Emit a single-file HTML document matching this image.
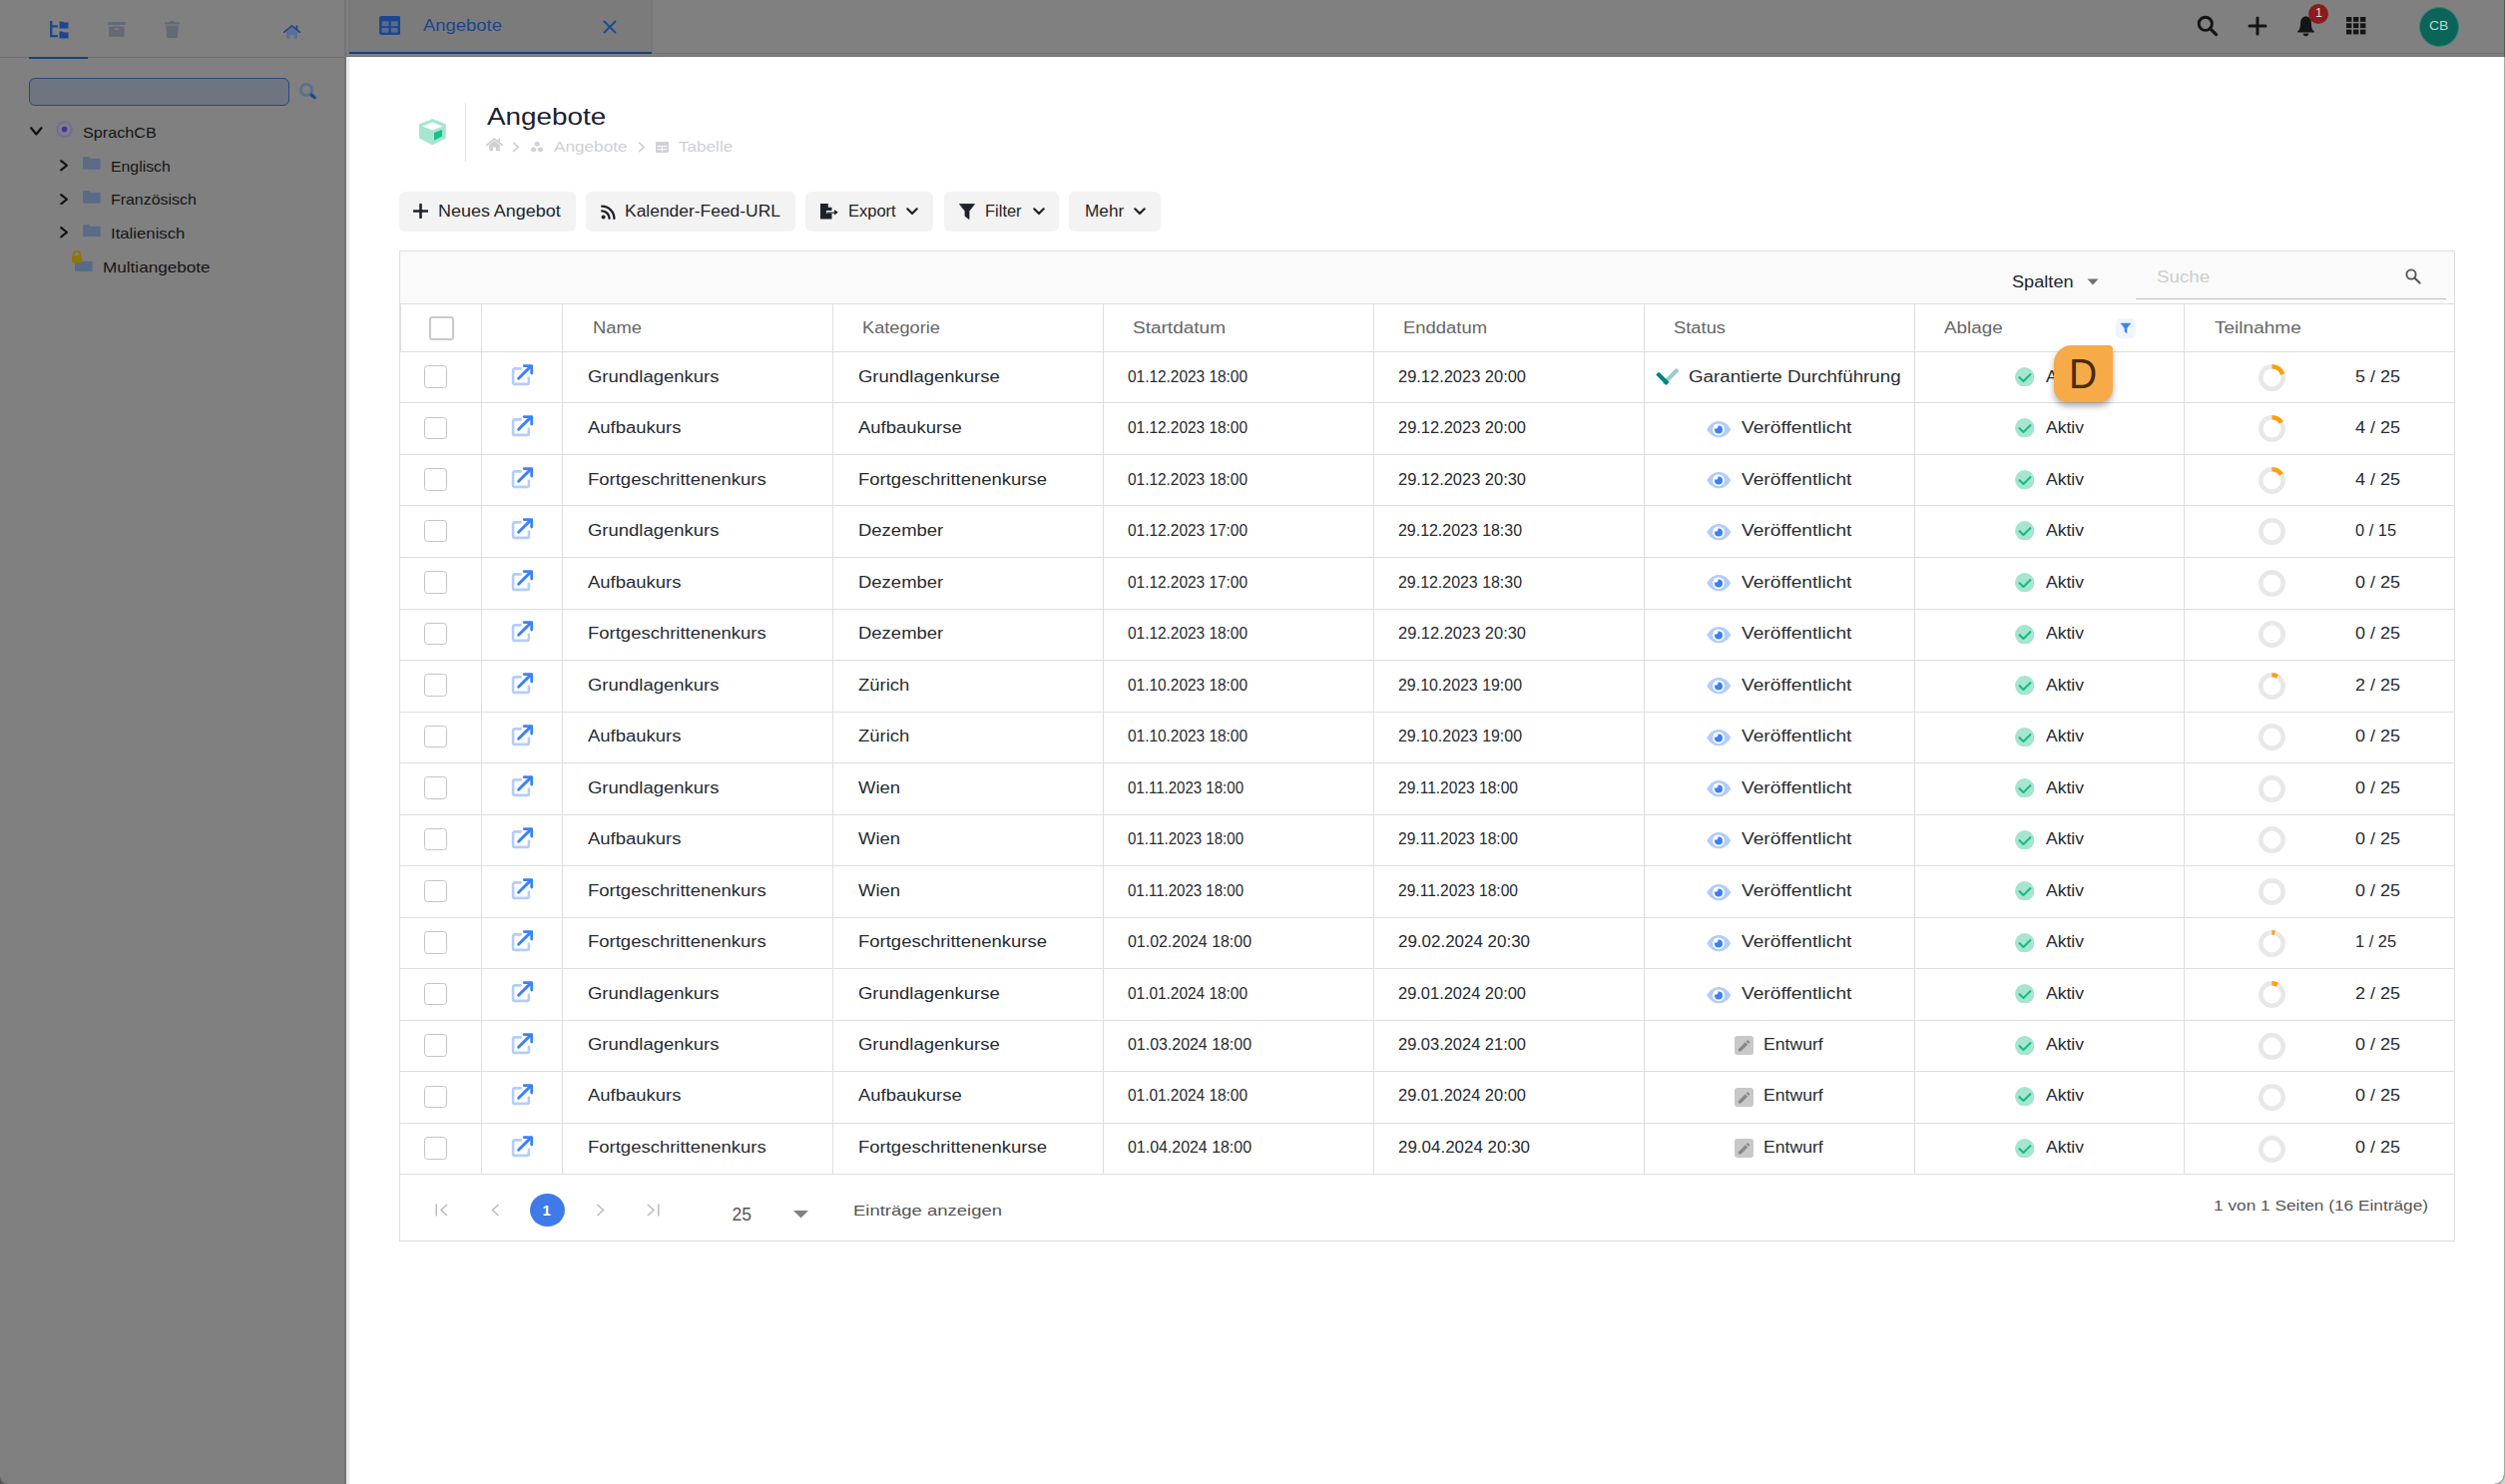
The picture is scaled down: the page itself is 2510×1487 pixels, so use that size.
<!DOCTYPE html>
<html><head><meta charset="utf-8"><title>Angebote</title>
<style>
html,body{margin:0;padding:0;}
body{width:2510px;height:1487px;overflow:hidden;position:relative;background:#fff;font-family:"Liberation Sans", sans-serif;}
.a{position:absolute;}
.t{position:absolute;white-space:pre;line-height:1;}
</style></head><body>
<div class="a" style="left:0px;top:0px;width:347.00px;height:1487.00px;background:#808080;"></div><div class="a" style="left:345px;top:0px;width:2.00px;height:1487.00px;background:#737373;"></div><div class="a" style="left:0px;top:57px;width:345.00px;height:1.00px;background:#6d6d6d;"></div><svg class="a" style="left:0px;top:1480px;" width="8" height="7" viewBox="0 0 8 7"><path d="M0 0 V7 H7 A7 7 0 0 1 0 0 Z" fill="#555555"/><path d="M0.3 0 A7 7 0 0 0 7 6.7" fill="none" stroke="#6c6c6c" stroke-width="1.1"/></svg><div class="a" style="left:29px;top:57px;width:59.00px;height:1.50px;background:#173e80;"></div><svg class="a" style="left:48.5px;top:21px;" width="20" height="18" viewBox="0 0 20 18"><path d="M1 0 H3.4 V4.3 H9 V6.6 H3.4 V14 H9 V16.3 H1 Z" fill="#1e4690"/><path d="M10.5 0.5 H14 L15 1.5 H19.5 V7.5 H10.5 Z M10.5 10.5 H14 L15 11.5 H19.5 V17.5 H10.5 Z" fill="#1e4690"/></svg><svg class="a" style="left:108px;top:22px;" width="18" height="15" viewBox="0 0 18 15"><rect x="0" y="0" width="17.5" height="3" rx="0.5" fill="#636a75"/><rect x="1" y="4.5" width="15.5" height="10.3" fill="#636a75"/><rect x="6.5" y="6.5" width="4.5" height="1.5" fill="#808080"/></svg><svg class="a" style="left:165px;top:21px;" width="15" height="17" viewBox="0 0 15 17"><rect x="0" y="1.3" width="15" height="2.2" fill="#636a75"/><rect x="5" y="0" width="5" height="2" rx="1" fill="#636a75"/><path d="M1.2 4.5 H13.8 L12.8 17 H2.2 Z" fill="#636a75"/></svg><svg class="a" style="left:284px;top:24.8px;" width="17" height="14" viewBox="0 0 17 14"><path d="M3 7 L8.5 2.5 L14 7 V13.6 H10.5 V10 H6.5 V13.6 H3 Z" fill="#5a6f96"/><path d="M0.8 7.2 L8.5 0.9 L16.2 7.2" fill="none" stroke="#1c4490" stroke-width="1.7" stroke-linecap="round"/><rect x="12.5" y="0.6" width="1.7" height="4.2" fill="#1c4490"/></svg><div class="a" style="left:29.2px;top:78px;width:258.6px;height:25.6px;border:1.4px solid #21498c;border-radius:6px;background:#6e7580"></div><svg class="a" style="left:299px;top:82px;" width="20" height="20" viewBox="0 0 20 20"><circle cx="8" cy="8" r="5.6" fill="none" stroke="#5b6d8e" stroke-width="2.7"/><path d="M12.3 12.2 L17.2 16.6" stroke="#1f4790" stroke-width="3.2"/></svg><svg class="a" style="left:30px;top:127px;" width="12.7" height="9" viewBox="0 0 12.7 9"><path d="M1.2 1.2 L6.35 7.5 L11.5 1.2" fill="none" stroke="#111" stroke-width="2.2" stroke-linecap="round" stroke-linejoin="round"/></svg><svg class="a" style="left:56px;top:121px;" width="18" height="18" viewBox="0 0 18 18"><circle cx="8.6" cy="8.6" r="7.3" fill="none" stroke="#74699c" stroke-width="2"/><circle cx="8.6" cy="8.6" r="2.8" fill="#3f34a0"/></svg><span class="t" style="left:83.30px;top:125.00px;font-size:15px;color:#151515;transform:scaleX(1.0779);transform-origin:0 0;">SprachCB</span><svg class="a" style="left:59.5px;top:160.0px;" width="8.5" height="11.5" viewBox="0 0 8.5 11.5"><path d="M1.2 1.2 L7.0 5.75 L1.2 10.3" fill="none" stroke="#111" stroke-width="2.2" stroke-linecap="round" stroke-linejoin="round"/></svg><svg class="a" style="left:83px;top:157.3px;" width="17.6" height="12.7" viewBox="0 0 17.6 12.7"><path d="M0 1.2 Q0 0 1.2 0 H6 L7.6 1.8 H16.4 Q17.6 1.8 17.6 3 V11.5 Q17.6 12.7 16.4 12.7 H1.2 Q0 12.7 0 11.5 Z" fill="#5a6b88"/></svg><span class="t" style="left:110.60px;top:159.00px;font-size:15px;color:#151515;transform:scaleX(1.0546);transform-origin:0 0;">Englisch</span><svg class="a" style="left:59.5px;top:193.6px;" width="8.5" height="11.5" viewBox="0 0 8.5 11.5"><path d="M1.2 1.2 L7.0 5.75 L1.2 10.3" fill="none" stroke="#111" stroke-width="2.2" stroke-linecap="round" stroke-linejoin="round"/></svg><svg class="a" style="left:83px;top:190.9px;" width="17.6" height="12.7" viewBox="0 0 17.6 12.7"><path d="M0 1.2 Q0 0 1.2 0 H6 L7.6 1.8 H16.4 Q17.6 1.8 17.6 3 V11.5 Q17.6 12.7 16.4 12.7 H1.2 Q0 12.7 0 11.5 Z" fill="#5a6b88"/></svg><span class="t" style="left:110.60px;top:192.00px;font-size:15px;color:#151515;transform:scaleX(1.0611);transform-origin:0 0;">Französisch</span><svg class="a" style="left:59.5px;top:227.2px;" width="8.5" height="11.5" viewBox="0 0 8.5 11.5"><path d="M1.2 1.2 L7.0 5.75 L1.2 10.3" fill="none" stroke="#111" stroke-width="2.2" stroke-linecap="round" stroke-linejoin="round"/></svg><svg class="a" style="left:83px;top:224.5px;" width="17.6" height="12.7" viewBox="0 0 17.6 12.7"><path d="M0 1.2 Q0 0 1.2 0 H6 L7.6 1.8 H16.4 Q17.6 1.8 17.6 3 V11.5 Q17.6 12.7 16.4 12.7 H1.2 Q0 12.7 0 11.5 Z" fill="#5a6b88"/></svg><span class="t" style="left:110.60px;top:226.00px;font-size:15px;color:#151515;transform:scaleX(1.1154);transform-origin:0 0;">Italienisch</span><svg class="a" style="left:75.4px;top:259.8px;" width="17.6" height="12.7" viewBox="0 0 17.6 12.7"><path d="M0 1.2 Q0 0 1.2 0 H6 L7.6 1.8 H16.4 Q17.6 1.8 17.6 3 V11.5 Q17.6 12.7 16.4 12.7 H1.2 Q0 12.7 0 11.5 Z" fill="#5a6b88"/></svg><svg class="a" style="left:71px;top:250.5px;" width="12" height="13" viewBox="0 0 12 13"><path d="M2.8 5.5 V3.8 A3.2 3.2 0 0 1 9.2 3.8 V5.5" fill="none" stroke="#8f7800" stroke-width="1.8"/><rect x="1" y="5.3" width="10" height="7.2" rx="1" fill="#8f7800"/></svg><span class="t" style="left:103.40px;top:260.00px;font-size:15px;color:#151515;transform:scaleX(1.1418);transform-origin:0 0;">Multiangebote</span><div class="a" style="left:347px;top:0px;width:2163.00px;height:57.00px;background:#808080;"></div><div class="a" style="left:347px;top:53px;width:2163.00px;height:1.00px;background:#727272;"></div><div class="a" style="left:347px;top:56px;width:2163.00px;height:1.00px;background:#747474;"></div><div class="a" style="left:349px;top:0px;width:305.00px;height:52.00px;background:#7b7b7b;"></div><div class="a" style="left:349px;top:0px;width:1.00px;height:52.00px;background:#767676;"></div><div class="a" style="left:653px;top:0px;width:1.00px;height:54.00px;background:#767676;"></div><div class="a" style="left:350px;top:52px;width:303.00px;height:2.00px;background:#173e80;"></div><svg class="a" style="left:380px;top:16px;" width="21.3" height="19" viewBox="0 0 21.3 19"><rect x="0" y="0" width="21.3" height="19" rx="2.2" fill="#1e4690"/><rect x="2.6" y="5.3" width="6.8" height="5" fill="#5a6c8c"/><rect x="11.8" y="5.3" width="6.8" height="5" fill="#5a6c8c"/><rect x="2.6" y="12" width="6.8" height="4.6" fill="#5a6c8c"/><rect x="11.8" y="12" width="6.8" height="4.6" fill="#5a6c8c"/></svg><span class="t" style="left:424.00px;top:18.00px;font-size:16px;color:#1c4590;transform:scaleX(1.1530);transform-origin:0 0;">Angebote</span><svg class="a" style="left:604px;top:20px;" width="14" height="14" viewBox="0 0 14 14"><path d="M1.5 1.5 L12.5 12.5 M12.5 1.5 L1.5 12.5" stroke="#1f4a95" stroke-width="1.9" stroke-linecap="round"/></svg><svg class="a" style="left:2201px;top:15px;" width="22" height="22" viewBox="0 0 22 22"><circle cx="8.8" cy="8.8" r="6.6" fill="none" stroke="#141414" stroke-width="2.9"/><path d="M13.6 13.6 L19.6 19.6" stroke="#141414" stroke-width="3.2" stroke-linecap="round"/></svg><svg class="a" style="left:2252px;top:16px;" width="20" height="20" viewBox="0 0 20 20"><path d="M10 2 V18 M2 10 H18" stroke="#141414" stroke-width="3" stroke-linecap="round"/></svg><svg class="a" style="left:2301px;top:15px;" width="19" height="22" viewBox="0 0 19 22"><path d="M9.5 1.2 C4.5 2 4 6 4 9.5 C4 13 3 15 1.2 16.6 Q0.8 17.4 1.8 17.6 H17.2 Q18.2 17.4 17.8 16.6 C16 15 15 13 15 9.5 C15 6 14.5 2 9.5 1.2 Z" fill="#141414"/><path d="M6.8 18.6 A2.7 2.7 0 0 0 12.2 18.6 Z" fill="#141414"/></svg><div class="a" style="left:2313px;top:4px;width:20px;height:20px;border-radius:50%;background:#8a1c1c"></div><span class="t" style="left:2320.00px;top:7.00px;font-size:12.5px;color:#dadada;">1</span><svg class="a" style="left:2351px;top:17px;" width="20" height="18" viewBox="0 0 20 18"><rect x="0" y="0.0" width="5.4" height="4.8" fill="#141414"/><rect x="7" y="0.0" width="5.4" height="4.8" fill="#141414"/><rect x="14" y="0.0" width="5.4" height="4.8" fill="#141414"/><rect x="0" y="6.3" width="5.4" height="4.8" fill="#141414"/><rect x="7" y="6.3" width="5.4" height="4.8" fill="#141414"/><rect x="14" y="6.3" width="5.4" height="4.8" fill="#141414"/><rect x="0" y="12.6" width="5.4" height="4.8" fill="#141414"/><rect x="7" y="12.6" width="5.4" height="4.8" fill="#141414"/><rect x="14" y="12.6" width="5.4" height="4.8" fill="#141414"/></svg><div class="a" style="left:2424px;top:7px;width:38px;height:38px;border-radius:50%;background:#0a6458;border:1px solid #3a8078"></div><span class="t" style="left:2434.20px;top:19.00px;font-size:13.3px;color:#c0d4cf;transform:scaleX(1.0441);transform-origin:0 0;">CB</span><div class="a" style="left:347px;top:57px;width:2163.00px;height:1430.00px;background:#ffffff;"></div><div class="a" style="left:347px;top:57px;width:1.00px;height:1430.00px;background:#f2f2f2;"></div><div class="a" style="left:348px;top:57px;width:2.00px;height:1430.00px;background:#e5e5e5;"></div><div class="a" style="left:2509px;top:57px;width:1.00px;height:1430.00px;background:#a8a8a8;"></div><div class="a" style="left:2509px;top:0px;width:1.00px;height:57.00px;background:#585858;"></div><svg class="a" style="left:2497px;top:1475px;" width="13" height="12" viewBox="0 0 13 12"><path d="M13 2 V12 H2 A10 10 0 0 0 12 2 Z" fill="#d0d0d0"/><path d="M12.5 0 V2 A10.5 10.5 0 0 1 2 12.5" fill="none" stroke="#a4a4a4" stroke-width="1.3"/></svg><svg class="a" style="left:420px;top:119px;" width="27" height="27" viewBox="0 0 27 27"><path d="M13.3 0 L26.8 5.3 V19.5 L13.3 26.3 L0 19.5 V5.3 Z" fill="#a5e6d1"/><path d="M3 7.5 L13.5 3.4 L23.4 7.5 L13.5 11.4 Z" fill="#ffffff"/><path d="M15 14 L23 11 V17.6 L15 21.7 Z" fill="#19bf8a"/></svg><div class="a" style="left:466px;top:103px;width:1.00px;height:59.00px;background:#e3e3e3;"></div><span class="t" style="left:487.80px;top:105.00px;font-size:24px;color:#1b2030;transform:scaleX(1.1599);transform-origin:0 0;">Angebote</span><svg class="a" style="left:487px;top:137.5px;" width="17" height="14" viewBox="0 0 17 14"><path d="M3.2 7.2 L8.5 3 L13.8 7.2 V13.2 H10 V9.6 H7 V13.2 H3.2 Z" fill="#cfd0d8"/><path d="M0.9 7.4 L8.5 1.2 L16.1 7.4" fill="none" stroke="#cfd0d8" stroke-width="1.8" stroke-linecap="round" stroke-linejoin="round"/><rect x="12.2" y="0.6" width="1.8" height="4.2" fill="#cfd0d8"/></svg><svg class="a" style="left:513px;top:142px;" width="8" height="11" viewBox="0 0 8 11"><path d="M1.6 1.2 L6.2 5.4 L1.6 9.6" fill="none" stroke="#cfd0d8" stroke-width="1.7" stroke-linecap="round" stroke-linejoin="round"/></svg><svg class="a" style="left:530.5px;top:141px;" width="14" height="12.5" viewBox="0 0 14 12.5"><path d="M7 0.40000000000000036 L9.9 1.8000000000000003 V4.800000000000001 L7 6.2 L4.1 4.800000000000001 V1.8000000000000003 Z" fill="#cfd0d8" stroke="#fff" stroke-width="0.7"/><path d="M3.6 6.000000000000001 L6.5 7.4 V10.4 L3.6 11.8 L0.7000000000000002 10.4 V7.4 Z" fill="#cfd0d8" stroke="#fff" stroke-width="0.7"/><path d="M10.4 6.000000000000001 L13.3 7.4 V10.4 L10.4 11.8 L7.5 10.4 V7.4 Z" fill="#cfd0d8" stroke="#fff" stroke-width="0.7"/></svg><span class="t" style="left:554.80px;top:140.00px;font-size:14.5px;color:#cfd0d8;transform:scaleX(1.1837);transform-origin:0 0;">Angebote</span><svg class="a" style="left:639px;top:142px;" width="8" height="11" viewBox="0 0 8 11"><path d="M1.6 1.2 L6.2 5.4 L1.6 9.6" fill="none" stroke="#cfd0d8" stroke-width="1.7" stroke-linecap="round" stroke-linejoin="round"/></svg><svg class="a" style="left:657px;top:142px;" width="13" height="11" viewBox="0 0 13 11"><rect x="0" y="0" width="13" height="11" rx="1.2" fill="#cfd0d8"/><path d="M1.4 4.6 H11.6 M1.4 7.7 H11.6 M6.5 4.6 V9.6" stroke="#fff" stroke-width="1"/></svg><span class="t" style="left:680.20px;top:140.00px;font-size:14.5px;color:#cfd0d8;transform:scaleX(1.1795);transform-origin:0 0;">Tabelle</span><div class="a" style="left:400px;top:192px;width:177px;height:40px;border-radius:6px;background:#f3f3f3"></div><svg class="a" style="left:414px;top:204px;" width="15" height="15" viewBox="0 0 15 15"><path d="M7.5 1 V14 M1 7.5 H14" stroke="#1f2328" stroke-width="2.6" stroke-linecap="round"/></svg><span class="t" style="left:438.70px;top:204.00px;font-size:16px;color:#1f2328;transform:scaleX(1.1213);transform-origin:0 0;">Neues Angebot</span><div class="a" style="left:587px;top:192px;width:210px;height:40px;border-radius:6px;background:#f3f3f3"></div><svg class="a" style="left:601.5px;top:204.7px;" width="15" height="15" viewBox="0 0 15 15"><circle cx="2.6" cy="12.4" r="2" fill="#1f2328"/><path d="M1.2 6.4 A7.6 7.6 0 0 1 8.6 13.8" fill="none" stroke="#1f2328" stroke-width="2.4" stroke-linecap="round"/><path d="M1.2 1.6 A12.4 12.4 0 0 1 13.4 13.8" fill="none" stroke="#1f2328" stroke-width="2.4" stroke-linecap="round"/></svg><span class="t" style="left:625.60px;top:204.00px;font-size:16px;color:#1f2328;transform:scaleX(1.0895);transform-origin:0 0;">Kalender-Feed-URL</span><div class="a" style="left:807px;top:192px;width:128px;height:40px;border-radius:6px;background:#f3f3f3"></div><svg class="a" style="left:822px;top:204px;" width="18" height="16" viewBox="0 0 18 16"><path d="M0 0 H7.5 L11.5 4 V7 H6 V10 H11.5 V15.5 H0 Z" fill="#1f2328"/><path d="M7.8 0 V3.7 H11.5" fill="#f3f3f3"/><path d="M6.5 8.5 H14 V6 L17.8 8.8 L14 11.6 V9.8 H6.5 Z" fill="#1f2328"/></svg><span class="t" style="left:850.00px;top:204.00px;font-size:16px;color:#1f2328;transform:scaleX(1.0314);transform-origin:0 0;">Export</span><svg class="a" style="left:908px;top:208px;" width="12" height="8" viewBox="0 0 12 8"><path d="M1.3 1.3 L6 6 L10.7 1.3" fill="none" stroke="#1f2328" stroke-width="2.2" stroke-linecap="round" stroke-linejoin="round"/></svg><div class="a" style="left:946px;top:192px;width:115px;height:40px;border-radius:6px;background:#f3f3f3"></div><svg class="a" style="left:961px;top:204px;" width="16" height="16" viewBox="0 0 16 16"><path d="M0.5 0.5 H15.5 L10 7.5 V15.5 L6 12.5 V7.5 Z" fill="#1f2328" stroke="#1f2328" stroke-width="0.8" stroke-linejoin="round"/></svg><span class="t" style="left:987.40px;top:204.00px;font-size:16px;color:#1f2328;transform:scaleX(1.0292);transform-origin:0 0;">Filter</span><svg class="a" style="left:1035px;top:208px;" width="12" height="8" viewBox="0 0 12 8"><path d="M1.3 1.3 L6 6 L10.7 1.3" fill="none" stroke="#1f2328" stroke-width="2.2" stroke-linecap="round" stroke-linejoin="round"/></svg><div class="a" style="left:1071px;top:192px;width:92px;height:40px;border-radius:6px;background:#f3f3f3"></div><span class="t" style="left:1086.60px;top:204.00px;font-size:16px;color:#1f2328;transform:scaleX(1.0754);transform-origin:0 0;">Mehr</span><svg class="a" style="left:1136px;top:208px;" width="12" height="8" viewBox="0 0 12 8"><path d="M1.3 1.3 L6 6 L10.7 1.3" fill="none" stroke="#1f2328" stroke-width="2.2" stroke-linecap="round" stroke-linejoin="round"/></svg><div class="a" style="left:400px;top:251px;width:2058px;height:991px;border:1px solid #dedede;box-sizing:content-box;"></div><div class="a" style="left:401px;top:252px;width:2058.00px;height:52.00px;background:#fafafa;"></div><span class="t" style="left:2016.20px;top:275.00px;font-size:16px;color:#22262b;transform:scaleX(1.1352);transform-origin:0 0;">Spalten</span><svg class="a" style="left:2091px;top:279px;" width="12" height="7" viewBox="0 0 12 7"><path d="M0.5 0.5 H11.5 L6 6.5 Z" fill="#707070"/></svg><span class="t" style="left:2160.50px;top:270.00px;font-size:16px;color:#cdcdcd;transform:scaleX(1.1725);transform-origin:0 0;">Suche</span><svg class="a" style="left:2410px;top:269px;" width="16" height="16" viewBox="0 0 16 16"><circle cx="6" cy="6" r="4.6" fill="none" stroke="#555" stroke-width="1.9"/><path d="M9.4 9.4 L14.6 14.6" stroke="#555" stroke-width="2.1" stroke-linecap="round"/></svg><div class="a" style="left:2140px;top:298.5px;width:311.00px;height:1.50px;background:#bdbdbd;"></div><div class="a" style="left:400px;top:304px;width:2059.00px;height:1.00px;background:#dedede;"></div><div class="a" style="left:400px;top:352px;width:2059.00px;height:1.00px;background:#dedede;"></div><div class="a" style="left:400px;top:403px;width:2059.00px;height:1.00px;background:#dedede;"></div><div class="a" style="left:400px;top:455px;width:2059.00px;height:1.00px;background:#dedede;"></div><div class="a" style="left:400px;top:506px;width:2059.00px;height:1.00px;background:#dedede;"></div><div class="a" style="left:400px;top:558px;width:2059.00px;height:1.00px;background:#dedede;"></div><div class="a" style="left:400px;top:610px;width:2059.00px;height:1.00px;background:#dedede;"></div><div class="a" style="left:400px;top:661px;width:2059.00px;height:1.00px;background:#dedede;"></div><div class="a" style="left:400px;top:713px;width:2059.00px;height:1.00px;background:#dedede;"></div><div class="a" style="left:400px;top:764px;width:2059.00px;height:1.00px;background:#dedede;"></div><div class="a" style="left:400px;top:816px;width:2059.00px;height:1.00px;background:#dedede;"></div><div class="a" style="left:400px;top:867px;width:2059.00px;height:1.00px;background:#dedede;"></div><div class="a" style="left:400px;top:919px;width:2059.00px;height:1.00px;background:#dedede;"></div><div class="a" style="left:400px;top:970px;width:2059.00px;height:1.00px;background:#dedede;"></div><div class="a" style="left:400px;top:1022px;width:2059.00px;height:1.00px;background:#dedede;"></div><div class="a" style="left:400px;top:1073px;width:2059.00px;height:1.00px;background:#dedede;"></div><div class="a" style="left:400px;top:1125px;width:2059.00px;height:1.00px;background:#dedede;"></div><div class="a" style="left:400px;top:1176px;width:2059.00px;height:1.00px;background:#dedede;"></div><div class="a" style="left:482px;top:304px;width:1.00px;height:873.00px;background:#dedede;"></div><div class="a" style="left:563px;top:304px;width:1.00px;height:873.00px;background:#dedede;"></div><div class="a" style="left:834px;top:304px;width:1.00px;height:873.00px;background:#dedede;"></div><div class="a" style="left:1105px;top:304px;width:1.00px;height:873.00px;background:#dedede;"></div><div class="a" style="left:1376px;top:304px;width:1.00px;height:873.00px;background:#dedede;"></div><div class="a" style="left:1647px;top:304px;width:1.00px;height:873.00px;background:#dedede;"></div><div class="a" style="left:1918px;top:304px;width:1.00px;height:873.00px;background:#dedede;"></div><div class="a" style="left:2188px;top:304px;width:1.00px;height:873.00px;background:#dedede;"></div><div class="a" style="left:401px;top:304px;width:1.00px;height:48.00px;background:#dedede;"></div><span class="t" style="left:593.60px;top:321.00px;font-size:16px;color:#666666;transform:scaleX(1.1479);transform-origin:0 0;">Name</span><span class="t" style="left:863.80px;top:321.00px;font-size:16px;color:#666666;transform:scaleX(1.1387);transform-origin:0 0;">Kategorie</span><span class="t" style="left:1135.00px;top:321.00px;font-size:16px;color:#666666;transform:scaleX(1.1883);transform-origin:0 0;">Startdatum</span><span class="t" style="left:1405.50px;top:321.00px;font-size:16px;color:#666666;transform:scaleX(1.1517);transform-origin:0 0;">Enddatum</span><span class="t" style="left:1676.60px;top:321.00px;font-size:16px;color:#666666;transform:scaleX(1.1464);transform-origin:0 0;">Status</span><span class="t" style="left:1947.80px;top:321.00px;font-size:16px;color:#666666;transform:scaleX(1.1780);transform-origin:0 0;">Ablage</span><span class="t" style="left:2219.00px;top:321.00px;font-size:16px;color:#666666;transform:scaleX(1.1901);transform-origin:0 0;">Teilnahme</span><div class="a" style="left:430px;top:317px;width:21px;height:20px;border:2px solid #c9c9c9;border-radius:3px;background:#fff"></div><div class="a" style="left:2120px;top:319px;width:20px;height:20px;border-radius:5px;background:#eef5ff"></div><svg class="a" style="left:2124px;top:323px;" width="12" height="12" viewBox="0 0 12 12"><path d="M0.5 0.8 H11.5 L7.3 5.8 V11.2 L4.7 9.6 V5.8 Z" fill="#3b82f6"/></svg><div class="a" style="left:425.3px;top:366.20px;width:20.5px;height:20.5px;border:1.7px solid #c4c4c4;border-radius:3.5px"></div><svg class="a" style="left:511.5px;top:364.8px;" width="23" height="23" viewBox="0 0 23 23"><path d="M9.6 4.4 H3.8 Q2.1 4.4 2.1 6.1 V18.2 Q2.1 19.9 3.8 19.9 H16.2 Q17.9 19.9 17.9 18.2 V13.7" fill="none" stroke="#b3cdfa" stroke-width="2.6" stroke-linecap="round" stroke-linejoin="round"/><path d="M7.6 14.2 L19.6 2.4" stroke="#3b82f6" stroke-width="2.9" stroke-linecap="round"/><path d="M13.2 1.6 H20.7 V9" fill="none" stroke="#3b82f6" stroke-width="2.8" stroke-linecap="round" stroke-linejoin="round"/></svg><span class="t" style="left:589.00px;top:370.00px;font-size:16px;color:#272b30;transform:scaleX(1.1550);transform-origin:0 0;">Grundlagenkurs</span><span class="t" style="left:859.80px;top:370.00px;font-size:16px;color:#272b30;transform:scaleX(1.1550);transform-origin:0 0;">Grundlagenkurse</span><span class="t" style="left:1130.20px;top:370.00px;font-size:16px;color:#272b30;transform:scaleX(0.9634);transform-origin:0 0;">01.12.2023 18:00</span><span class="t" style="left:1400.60px;top:370.00px;font-size:16px;color:#272b30;transform:scaleX(1.0276);transform-origin:0 0;">29.12.2023 20:00</span><svg class="a" style="left:1650px;top:352.4px;" width="36" height="40" viewBox="0 0 36 40"><path d="M18.2 31.2 L29.8 19.6" stroke="#9acbcb" stroke-width="4.2" stroke-linecap="round"/><path d="M12.2 23.6 L19.6 31" stroke="#068383" stroke-width="4.2" stroke-linecap="square"/></svg><span class="t" style="left:1691.90px;top:370.00px;font-size:16px;color:#272b30;transform:scaleX(1.1718);transform-origin:0 0;">Garantierte Durchführung</span><svg class="a" style="left:2019.3px;top:367.9px;" width="19" height="19" viewBox="0 0 19 19"><circle cx="9.7" cy="9.8" r="9.7" fill="#a6e5d0"/><path d="M4.6 10.2 L8.5 14 L15.3 7.2" fill="none" stroke="#16bb84" stroke-width="2.1" stroke-linecap="round" stroke-linejoin="round"/></svg><span class="t" style="left:2049.50px;top:370.00px;font-size:16px;color:#272b30;transform:scaleX(1.0960);transform-origin:0 0;">Aktiv</span><svg class="a" style="left:2263.1px;top:364.7px;" width="27" height="27" viewBox="0 0 27 27"><circle cx="13.5" cy="13.5" r="11.2" fill="none" stroke="#e8e8e8" stroke-width="4.6"/><path d="M13.5 2.3000000000000007 A11.2 11.2 0 0 1 24.15 10.04" fill="none" stroke="#ff9f0a" stroke-width="4.6"/></svg><span class="t" style="left:2359.60px;top:370.00px;font-size:16px;color:#272b30;transform:scaleX(1.1241);transform-origin:0 0;">5 / 25</span><div class="a" style="left:425.3px;top:417.73px;width:20.5px;height:20.5px;border:1.7px solid #c4c4c4;border-radius:3.5px"></div><svg class="a" style="left:511.5px;top:416.33px;" width="23" height="23" viewBox="0 0 23 23"><path d="M9.6 4.4 H3.8 Q2.1 4.4 2.1 6.1 V18.2 Q2.1 19.9 3.8 19.9 H16.2 Q17.9 19.9 17.9 18.2 V13.7" fill="none" stroke="#b3cdfa" stroke-width="2.6" stroke-linecap="round" stroke-linejoin="round"/><path d="M7.6 14.2 L19.6 2.4" stroke="#3b82f6" stroke-width="2.9" stroke-linecap="round"/><path d="M13.2 1.6 H20.7 V9" fill="none" stroke="#3b82f6" stroke-width="2.8" stroke-linecap="round" stroke-linejoin="round"/></svg><span class="t" style="left:589.00px;top:421.00px;font-size:16px;color:#272b30;transform:scaleX(1.1550);transform-origin:0 0;">Aufbaukurs</span><span class="t" style="left:859.80px;top:421.00px;font-size:16px;color:#272b30;transform:scaleX(1.1550);transform-origin:0 0;">Aufbaukurse</span><span class="t" style="left:1130.20px;top:421.00px;font-size:16px;color:#272b30;transform:scaleX(0.9634);transform-origin:0 0;">01.12.2023 18:00</span><span class="t" style="left:1400.60px;top:421.00px;font-size:16px;color:#272b30;transform:scaleX(1.0276);transform-origin:0 0;">29.12.2023 20:00</span><svg class="a" style="left:1710px;top:421.73px;" width="25" height="17" viewBox="0 0 25 17"><path d="M0.3 8.3 C4 2 8 0.1 12.2 0.1 C16.4 0.1 20.4 2 24.3 8.3 C20.4 14.6 16.4 16.3 12.2 16.3 C8 16.3 4 14.6 0.3 8.3 Z" fill="#b2cdfa"/><circle cx="12" cy="8.3" r="5.9" fill="#ffffff"/><circle cx="12" cy="8.5" r="4" fill="#3b80f5"/><circle cx="9.4" cy="5.6" r="2.1" fill="#ffffff"/></svg><span class="t" style="left:1744.60px;top:421.00px;font-size:16px;color:#272b30;transform:scaleX(1.1972);transform-origin:0 0;">Veröffentlicht</span><svg class="a" style="left:2019.3px;top:419.43px;" width="19" height="19" viewBox="0 0 19 19"><circle cx="9.7" cy="9.8" r="9.7" fill="#a6e5d0"/><path d="M4.6 10.2 L8.5 14 L15.3 7.2" fill="none" stroke="#16bb84" stroke-width="2.1" stroke-linecap="round" stroke-linejoin="round"/></svg><span class="t" style="left:2049.50px;top:421.00px;font-size:16px;color:#272b30;transform:scaleX(1.0960);transform-origin:0 0;">Aktiv</span><svg class="a" style="left:2263.1px;top:416.22999999999996px;" width="27" height="27" viewBox="0 0 27 27"><circle cx="13.5" cy="13.5" r="11.2" fill="none" stroke="#e8e8e8" stroke-width="4.6"/><path d="M13.5 2.3000000000000007 A11.2 11.2 0 0 1 22.96 7.50" fill="none" stroke="#ff9f0a" stroke-width="4.6"/></svg><span class="t" style="left:2359.60px;top:421.00px;font-size:16px;color:#272b30;transform:scaleX(1.1241);transform-origin:0 0;">4 / 25</span><div class="a" style="left:425.3px;top:469.26px;width:20.5px;height:20.5px;border:1.7px solid #c4c4c4;border-radius:3.5px"></div><svg class="a" style="left:511.5px;top:467.86px;" width="23" height="23" viewBox="0 0 23 23"><path d="M9.6 4.4 H3.8 Q2.1 4.4 2.1 6.1 V18.2 Q2.1 19.9 3.8 19.9 H16.2 Q17.9 19.9 17.9 18.2 V13.7" fill="none" stroke="#b3cdfa" stroke-width="2.6" stroke-linecap="round" stroke-linejoin="round"/><path d="M7.6 14.2 L19.6 2.4" stroke="#3b82f6" stroke-width="2.9" stroke-linecap="round"/><path d="M13.2 1.6 H20.7 V9" fill="none" stroke="#3b82f6" stroke-width="2.8" stroke-linecap="round" stroke-linejoin="round"/></svg><span class="t" style="left:589.00px;top:473.00px;font-size:16px;color:#272b30;transform:scaleX(1.1550);transform-origin:0 0;">Fortgeschrittenenkurs</span><span class="t" style="left:859.80px;top:473.00px;font-size:16px;color:#272b30;transform:scaleX(1.1550);transform-origin:0 0;">Fortgeschrittenenkurse</span><span class="t" style="left:1130.20px;top:473.00px;font-size:16px;color:#272b30;transform:scaleX(0.9634);transform-origin:0 0;">01.12.2023 18:00</span><span class="t" style="left:1400.60px;top:473.00px;font-size:16px;color:#272b30;transform:scaleX(1.0276);transform-origin:0 0;">29.12.2023 20:30</span><svg class="a" style="left:1710px;top:473.26px;" width="25" height="17" viewBox="0 0 25 17"><path d="M0.3 8.3 C4 2 8 0.1 12.2 0.1 C16.4 0.1 20.4 2 24.3 8.3 C20.4 14.6 16.4 16.3 12.2 16.3 C8 16.3 4 14.6 0.3 8.3 Z" fill="#b2cdfa"/><circle cx="12" cy="8.3" r="5.9" fill="#ffffff"/><circle cx="12" cy="8.5" r="4" fill="#3b80f5"/><circle cx="9.4" cy="5.6" r="2.1" fill="#ffffff"/></svg><span class="t" style="left:1744.60px;top:473.00px;font-size:16px;color:#272b30;transform:scaleX(1.1972);transform-origin:0 0;">Veröffentlicht</span><svg class="a" style="left:2019.3px;top:470.96px;" width="19" height="19" viewBox="0 0 19 19"><circle cx="9.7" cy="9.8" r="9.7" fill="#a6e5d0"/><path d="M4.6 10.2 L8.5 14 L15.3 7.2" fill="none" stroke="#16bb84" stroke-width="2.1" stroke-linecap="round" stroke-linejoin="round"/></svg><span class="t" style="left:2049.50px;top:473.00px;font-size:16px;color:#272b30;transform:scaleX(1.0960);transform-origin:0 0;">Aktiv</span><svg class="a" style="left:2263.1px;top:467.76px;" width="27" height="27" viewBox="0 0 27 27"><circle cx="13.5" cy="13.5" r="11.2" fill="none" stroke="#e8e8e8" stroke-width="4.6"/><path d="M13.5 2.3000000000000007 A11.2 11.2 0 0 1 22.96 7.50" fill="none" stroke="#ff9f0a" stroke-width="4.6"/></svg><span class="t" style="left:2359.60px;top:473.00px;font-size:16px;color:#272b30;transform:scaleX(1.1241);transform-origin:0 0;">4 / 25</span><div class="a" style="left:425.3px;top:520.79px;width:20.5px;height:20.5px;border:1.7px solid #c4c4c4;border-radius:3.5px"></div><svg class="a" style="left:511.5px;top:519.39px;" width="23" height="23" viewBox="0 0 23 23"><path d="M9.6 4.4 H3.8 Q2.1 4.4 2.1 6.1 V18.2 Q2.1 19.9 3.8 19.9 H16.2 Q17.9 19.9 17.9 18.2 V13.7" fill="none" stroke="#b3cdfa" stroke-width="2.6" stroke-linecap="round" stroke-linejoin="round"/><path d="M7.6 14.2 L19.6 2.4" stroke="#3b82f6" stroke-width="2.9" stroke-linecap="round"/><path d="M13.2 1.6 H20.7 V9" fill="none" stroke="#3b82f6" stroke-width="2.8" stroke-linecap="round" stroke-linejoin="round"/></svg><span class="t" style="left:589.00px;top:524.00px;font-size:16px;color:#272b30;transform:scaleX(1.1550);transform-origin:0 0;">Grundlagenkurs</span><span class="t" style="left:859.80px;top:524.00px;font-size:16px;color:#272b30;transform:scaleX(1.1550);transform-origin:0 0;">Dezember</span><span class="t" style="left:1130.20px;top:524.00px;font-size:16px;color:#272b30;transform:scaleX(0.9634);transform-origin:0 0;">01.12.2023 17:00</span><span class="t" style="left:1400.60px;top:524.00px;font-size:16px;color:#272b30;transform:scaleX(0.9955);transform-origin:0 0;">29.12.2023 18:30</span><svg class="a" style="left:1710px;top:524.79px;" width="25" height="17" viewBox="0 0 25 17"><path d="M0.3 8.3 C4 2 8 0.1 12.2 0.1 C16.4 0.1 20.4 2 24.3 8.3 C20.4 14.6 16.4 16.3 12.2 16.3 C8 16.3 4 14.6 0.3 8.3 Z" fill="#b2cdfa"/><circle cx="12" cy="8.3" r="5.9" fill="#ffffff"/><circle cx="12" cy="8.5" r="4" fill="#3b80f5"/><circle cx="9.4" cy="5.6" r="2.1" fill="#ffffff"/></svg><span class="t" style="left:1744.60px;top:524.00px;font-size:16px;color:#272b30;transform:scaleX(1.1972);transform-origin:0 0;">Veröffentlicht</span><svg class="a" style="left:2019.3px;top:522.49px;" width="19" height="19" viewBox="0 0 19 19"><circle cx="9.7" cy="9.8" r="9.7" fill="#a6e5d0"/><path d="M4.6 10.2 L8.5 14 L15.3 7.2" fill="none" stroke="#16bb84" stroke-width="2.1" stroke-linecap="round" stroke-linejoin="round"/></svg><span class="t" style="left:2049.50px;top:524.00px;font-size:16px;color:#272b30;transform:scaleX(1.0960);transform-origin:0 0;">Aktiv</span><svg class="a" style="left:2263.1px;top:519.29px;" width="27" height="27" viewBox="0 0 27 27"><circle cx="13.5" cy="13.5" r="11.2" fill="none" stroke="#e8e8e8" stroke-width="4.6"/></svg><span class="t" style="left:2359.60px;top:524.00px;font-size:16px;color:#272b30;transform:scaleX(1.0242);transform-origin:0 0;">0 / 15</span><div class="a" style="left:425.3px;top:572.32px;width:20.5px;height:20.5px;border:1.7px solid #c4c4c4;border-radius:3.5px"></div><svg class="a" style="left:511.5px;top:570.92px;" width="23" height="23" viewBox="0 0 23 23"><path d="M9.6 4.4 H3.8 Q2.1 4.4 2.1 6.1 V18.2 Q2.1 19.9 3.8 19.9 H16.2 Q17.9 19.9 17.9 18.2 V13.7" fill="none" stroke="#b3cdfa" stroke-width="2.6" stroke-linecap="round" stroke-linejoin="round"/><path d="M7.6 14.2 L19.6 2.4" stroke="#3b82f6" stroke-width="2.9" stroke-linecap="round"/><path d="M13.2 1.6 H20.7 V9" fill="none" stroke="#3b82f6" stroke-width="2.8" stroke-linecap="round" stroke-linejoin="round"/></svg><span class="t" style="left:589.00px;top:576.00px;font-size:16px;color:#272b30;transform:scaleX(1.1550);transform-origin:0 0;">Aufbaukurs</span><span class="t" style="left:859.80px;top:576.00px;font-size:16px;color:#272b30;transform:scaleX(1.1550);transform-origin:0 0;">Dezember</span><span class="t" style="left:1130.20px;top:576.00px;font-size:16px;color:#272b30;transform:scaleX(0.9634);transform-origin:0 0;">01.12.2023 17:00</span><span class="t" style="left:1400.60px;top:576.00px;font-size:16px;color:#272b30;transform:scaleX(0.9955);transform-origin:0 0;">29.12.2023 18:30</span><svg class="a" style="left:1710px;top:576.32px;" width="25" height="17" viewBox="0 0 25 17"><path d="M0.3 8.3 C4 2 8 0.1 12.2 0.1 C16.4 0.1 20.4 2 24.3 8.3 C20.4 14.6 16.4 16.3 12.2 16.3 C8 16.3 4 14.6 0.3 8.3 Z" fill="#b2cdfa"/><circle cx="12" cy="8.3" r="5.9" fill="#ffffff"/><circle cx="12" cy="8.5" r="4" fill="#3b80f5"/><circle cx="9.4" cy="5.6" r="2.1" fill="#ffffff"/></svg><span class="t" style="left:1744.60px;top:576.00px;font-size:16px;color:#272b30;transform:scaleX(1.1972);transform-origin:0 0;">Veröffentlicht</span><svg class="a" style="left:2019.3px;top:574.02px;" width="19" height="19" viewBox="0 0 19 19"><circle cx="9.7" cy="9.8" r="9.7" fill="#a6e5d0"/><path d="M4.6 10.2 L8.5 14 L15.3 7.2" fill="none" stroke="#16bb84" stroke-width="2.1" stroke-linecap="round" stroke-linejoin="round"/></svg><span class="t" style="left:2049.50px;top:576.00px;font-size:16px;color:#272b30;transform:scaleX(1.0960);transform-origin:0 0;">Aktiv</span><svg class="a" style="left:2263.1px;top:570.8199999999999px;" width="27" height="27" viewBox="0 0 27 27"><circle cx="13.5" cy="13.5" r="11.2" fill="none" stroke="#e8e8e8" stroke-width="4.6"/></svg><span class="t" style="left:2359.60px;top:576.00px;font-size:16px;color:#272b30;transform:scaleX(1.1241);transform-origin:0 0;">0 / 25</span><div class="a" style="left:425.3px;top:623.85px;width:20.5px;height:20.5px;border:1.7px solid #c4c4c4;border-radius:3.5px"></div><svg class="a" style="left:511.5px;top:622.45px;" width="23" height="23" viewBox="0 0 23 23"><path d="M9.6 4.4 H3.8 Q2.1 4.4 2.1 6.1 V18.2 Q2.1 19.9 3.8 19.9 H16.2 Q17.9 19.9 17.9 18.2 V13.7" fill="none" stroke="#b3cdfa" stroke-width="2.6" stroke-linecap="round" stroke-linejoin="round"/><path d="M7.6 14.2 L19.6 2.4" stroke="#3b82f6" stroke-width="2.9" stroke-linecap="round"/><path d="M13.2 1.6 H20.7 V9" fill="none" stroke="#3b82f6" stroke-width="2.8" stroke-linecap="round" stroke-linejoin="round"/></svg><span class="t" style="left:589.00px;top:627.00px;font-size:16px;color:#272b30;transform:scaleX(1.1550);transform-origin:0 0;">Fortgeschrittenenkurs</span><span class="t" style="left:859.80px;top:627.00px;font-size:16px;color:#272b30;transform:scaleX(1.1550);transform-origin:0 0;">Dezember</span><span class="t" style="left:1130.20px;top:627.00px;font-size:16px;color:#272b30;transform:scaleX(0.9634);transform-origin:0 0;">01.12.2023 18:00</span><span class="t" style="left:1400.60px;top:627.00px;font-size:16px;color:#272b30;transform:scaleX(1.0276);transform-origin:0 0;">29.12.2023 20:30</span><svg class="a" style="left:1710px;top:627.85px;" width="25" height="17" viewBox="0 0 25 17"><path d="M0.3 8.3 C4 2 8 0.1 12.2 0.1 C16.4 0.1 20.4 2 24.3 8.3 C20.4 14.6 16.4 16.3 12.2 16.3 C8 16.3 4 14.6 0.3 8.3 Z" fill="#b2cdfa"/><circle cx="12" cy="8.3" r="5.9" fill="#ffffff"/><circle cx="12" cy="8.5" r="4" fill="#3b80f5"/><circle cx="9.4" cy="5.6" r="2.1" fill="#ffffff"/></svg><span class="t" style="left:1744.60px;top:627.00px;font-size:16px;color:#272b30;transform:scaleX(1.1972);transform-origin:0 0;">Veröffentlicht</span><svg class="a" style="left:2019.3px;top:625.55px;" width="19" height="19" viewBox="0 0 19 19"><circle cx="9.7" cy="9.8" r="9.7" fill="#a6e5d0"/><path d="M4.6 10.2 L8.5 14 L15.3 7.2" fill="none" stroke="#16bb84" stroke-width="2.1" stroke-linecap="round" stroke-linejoin="round"/></svg><span class="t" style="left:2049.50px;top:627.00px;font-size:16px;color:#272b30;transform:scaleX(1.0960);transform-origin:0 0;">Aktiv</span><svg class="a" style="left:2263.1px;top:622.3499999999999px;" width="27" height="27" viewBox="0 0 27 27"><circle cx="13.5" cy="13.5" r="11.2" fill="none" stroke="#e8e8e8" stroke-width="4.6"/></svg><span class="t" style="left:2359.60px;top:627.00px;font-size:16px;color:#272b30;transform:scaleX(1.1241);transform-origin:0 0;">0 / 25</span><div class="a" style="left:425.3px;top:675.38px;width:20.5px;height:20.5px;border:1.7px solid #c4c4c4;border-radius:3.5px"></div><svg class="a" style="left:511.5px;top:673.98px;" width="23" height="23" viewBox="0 0 23 23"><path d="M9.6 4.4 H3.8 Q2.1 4.4 2.1 6.1 V18.2 Q2.1 19.9 3.8 19.9 H16.2 Q17.9 19.9 17.9 18.2 V13.7" fill="none" stroke="#b3cdfa" stroke-width="2.6" stroke-linecap="round" stroke-linejoin="round"/><path d="M7.6 14.2 L19.6 2.4" stroke="#3b82f6" stroke-width="2.9" stroke-linecap="round"/><path d="M13.2 1.6 H20.7 V9" fill="none" stroke="#3b82f6" stroke-width="2.8" stroke-linecap="round" stroke-linejoin="round"/></svg><span class="t" style="left:589.00px;top:679.00px;font-size:16px;color:#272b30;transform:scaleX(1.1550);transform-origin:0 0;">Grundlagenkurs</span><span class="t" style="left:859.80px;top:679.00px;font-size:16px;color:#272b30;transform:scaleX(1.1550);transform-origin:0 0;">Zürich</span><span class="t" style="left:1130.20px;top:679.00px;font-size:16px;color:#272b30;transform:scaleX(0.9634);transform-origin:0 0;">01.10.2023 18:00</span><span class="t" style="left:1400.60px;top:679.00px;font-size:16px;color:#272b30;transform:scaleX(0.9955);transform-origin:0 0;">29.10.2023 19:00</span><svg class="a" style="left:1710px;top:679.38px;" width="25" height="17" viewBox="0 0 25 17"><path d="M0.3 8.3 C4 2 8 0.1 12.2 0.1 C16.4 0.1 20.4 2 24.3 8.3 C20.4 14.6 16.4 16.3 12.2 16.3 C8 16.3 4 14.6 0.3 8.3 Z" fill="#b2cdfa"/><circle cx="12" cy="8.3" r="5.9" fill="#ffffff"/><circle cx="12" cy="8.5" r="4" fill="#3b80f5"/><circle cx="9.4" cy="5.6" r="2.1" fill="#ffffff"/></svg><span class="t" style="left:1744.60px;top:679.00px;font-size:16px;color:#272b30;transform:scaleX(1.1972);transform-origin:0 0;">Veröffentlicht</span><svg class="a" style="left:2019.3px;top:677.08px;" width="19" height="19" viewBox="0 0 19 19"><circle cx="9.7" cy="9.8" r="9.7" fill="#a6e5d0"/><path d="M4.6 10.2 L8.5 14 L15.3 7.2" fill="none" stroke="#16bb84" stroke-width="2.1" stroke-linecap="round" stroke-linejoin="round"/></svg><span class="t" style="left:2049.50px;top:679.00px;font-size:16px;color:#272b30;transform:scaleX(1.0960);transform-origin:0 0;">Aktiv</span><svg class="a" style="left:2263.1px;top:673.8799999999999px;" width="27" height="27" viewBox="0 0 27 27"><circle cx="13.5" cy="13.5" r="11.2" fill="none" stroke="#e8e8e8" stroke-width="4.6"/><path d="M13.5 2.3000000000000007 A11.2 11.2 0 0 1 18.90 3.69" fill="none" stroke="#ff9f0a" stroke-width="4.6"/></svg><span class="t" style="left:2359.60px;top:679.00px;font-size:16px;color:#272b30;transform:scaleX(1.1241);transform-origin:0 0;">2 / 25</span><div class="a" style="left:425.3px;top:726.91px;width:20.5px;height:20.5px;border:1.7px solid #c4c4c4;border-radius:3.5px"></div><svg class="a" style="left:511.5px;top:725.51px;" width="23" height="23" viewBox="0 0 23 23"><path d="M9.6 4.4 H3.8 Q2.1 4.4 2.1 6.1 V18.2 Q2.1 19.9 3.8 19.9 H16.2 Q17.9 19.9 17.9 18.2 V13.7" fill="none" stroke="#b3cdfa" stroke-width="2.6" stroke-linecap="round" stroke-linejoin="round"/><path d="M7.6 14.2 L19.6 2.4" stroke="#3b82f6" stroke-width="2.9" stroke-linecap="round"/><path d="M13.2 1.6 H20.7 V9" fill="none" stroke="#3b82f6" stroke-width="2.8" stroke-linecap="round" stroke-linejoin="round"/></svg><span class="t" style="left:589.00px;top:730.00px;font-size:16px;color:#272b30;transform:scaleX(1.1550);transform-origin:0 0;">Aufbaukurs</span><span class="t" style="left:859.80px;top:730.00px;font-size:16px;color:#272b30;transform:scaleX(1.1550);transform-origin:0 0;">Zürich</span><span class="t" style="left:1130.20px;top:730.00px;font-size:16px;color:#272b30;transform:scaleX(0.9634);transform-origin:0 0;">01.10.2023 18:00</span><span class="t" style="left:1400.60px;top:730.00px;font-size:16px;color:#272b30;transform:scaleX(0.9955);transform-origin:0 0;">29.10.2023 19:00</span><svg class="a" style="left:1710px;top:730.91px;" width="25" height="17" viewBox="0 0 25 17"><path d="M0.3 8.3 C4 2 8 0.1 12.2 0.1 C16.4 0.1 20.4 2 24.3 8.3 C20.4 14.6 16.4 16.3 12.2 16.3 C8 16.3 4 14.6 0.3 8.3 Z" fill="#b2cdfa"/><circle cx="12" cy="8.3" r="5.9" fill="#ffffff"/><circle cx="12" cy="8.5" r="4" fill="#3b80f5"/><circle cx="9.4" cy="5.6" r="2.1" fill="#ffffff"/></svg><span class="t" style="left:1744.60px;top:730.00px;font-size:16px;color:#272b30;transform:scaleX(1.1972);transform-origin:0 0;">Veröffentlicht</span><svg class="a" style="left:2019.3px;top:728.61px;" width="19" height="19" viewBox="0 0 19 19"><circle cx="9.7" cy="9.8" r="9.7" fill="#a6e5d0"/><path d="M4.6 10.2 L8.5 14 L15.3 7.2" fill="none" stroke="#16bb84" stroke-width="2.1" stroke-linecap="round" stroke-linejoin="round"/></svg><span class="t" style="left:2049.50px;top:730.00px;font-size:16px;color:#272b30;transform:scaleX(1.0960);transform-origin:0 0;">Aktiv</span><svg class="a" style="left:2263.1px;top:725.41px;" width="27" height="27" viewBox="0 0 27 27"><circle cx="13.5" cy="13.5" r="11.2" fill="none" stroke="#e8e8e8" stroke-width="4.6"/></svg><span class="t" style="left:2359.60px;top:730.00px;font-size:16px;color:#272b30;transform:scaleX(1.1241);transform-origin:0 0;">0 / 25</span><div class="a" style="left:425.3px;top:778.44px;width:20.5px;height:20.5px;border:1.7px solid #c4c4c4;border-radius:3.5px"></div><svg class="a" style="left:511.5px;top:777.04px;" width="23" height="23" viewBox="0 0 23 23"><path d="M9.6 4.4 H3.8 Q2.1 4.4 2.1 6.1 V18.2 Q2.1 19.9 3.8 19.9 H16.2 Q17.9 19.9 17.9 18.2 V13.7" fill="none" stroke="#b3cdfa" stroke-width="2.6" stroke-linecap="round" stroke-linejoin="round"/><path d="M7.6 14.2 L19.6 2.4" stroke="#3b82f6" stroke-width="2.9" stroke-linecap="round"/><path d="M13.2 1.6 H20.7 V9" fill="none" stroke="#3b82f6" stroke-width="2.8" stroke-linecap="round" stroke-linejoin="round"/></svg><span class="t" style="left:589.00px;top:782.00px;font-size:16px;color:#272b30;transform:scaleX(1.1550);transform-origin:0 0;">Grundlagenkurs</span><span class="t" style="left:859.80px;top:782.00px;font-size:16px;color:#272b30;transform:scaleX(1.1550);transform-origin:0 0;">Wien</span><span class="t" style="left:1130.20px;top:782.00px;font-size:16px;color:#272b30;transform:scaleX(0.9402);transform-origin:0 0;">01.11.2023 18:00</span><span class="t" style="left:1400.60px;top:782.00px;font-size:16px;color:#272b30;transform:scaleX(0.9726);transform-origin:0 0;">29.11.2023 18:00</span><svg class="a" style="left:1710px;top:782.44px;" width="25" height="17" viewBox="0 0 25 17"><path d="M0.3 8.3 C4 2 8 0.1 12.2 0.1 C16.4 0.1 20.4 2 24.3 8.3 C20.4 14.6 16.4 16.3 12.2 16.3 C8 16.3 4 14.6 0.3 8.3 Z" fill="#b2cdfa"/><circle cx="12" cy="8.3" r="5.9" fill="#ffffff"/><circle cx="12" cy="8.5" r="4" fill="#3b80f5"/><circle cx="9.4" cy="5.6" r="2.1" fill="#ffffff"/></svg><span class="t" style="left:1744.60px;top:782.00px;font-size:16px;color:#272b30;transform:scaleX(1.1972);transform-origin:0 0;">Veröffentlicht</span><svg class="a" style="left:2019.3px;top:780.14px;" width="19" height="19" viewBox="0 0 19 19"><circle cx="9.7" cy="9.8" r="9.7" fill="#a6e5d0"/><path d="M4.6 10.2 L8.5 14 L15.3 7.2" fill="none" stroke="#16bb84" stroke-width="2.1" stroke-linecap="round" stroke-linejoin="round"/></svg><span class="t" style="left:2049.50px;top:782.00px;font-size:16px;color:#272b30;transform:scaleX(1.0960);transform-origin:0 0;">Aktiv</span><svg class="a" style="left:2263.1px;top:776.9399999999999px;" width="27" height="27" viewBox="0 0 27 27"><circle cx="13.5" cy="13.5" r="11.2" fill="none" stroke="#e8e8e8" stroke-width="4.6"/></svg><span class="t" style="left:2359.60px;top:782.00px;font-size:16px;color:#272b30;transform:scaleX(1.1241);transform-origin:0 0;">0 / 25</span><div class="a" style="left:425.3px;top:829.97px;width:20.5px;height:20.5px;border:1.7px solid #c4c4c4;border-radius:3.5px"></div><svg class="a" style="left:511.5px;top:828.57px;" width="23" height="23" viewBox="0 0 23 23"><path d="M9.6 4.4 H3.8 Q2.1 4.4 2.1 6.1 V18.2 Q2.1 19.9 3.8 19.9 H16.2 Q17.9 19.9 17.9 18.2 V13.7" fill="none" stroke="#b3cdfa" stroke-width="2.6" stroke-linecap="round" stroke-linejoin="round"/><path d="M7.6 14.2 L19.6 2.4" stroke="#3b82f6" stroke-width="2.9" stroke-linecap="round"/><path d="M13.2 1.6 H20.7 V9" fill="none" stroke="#3b82f6" stroke-width="2.8" stroke-linecap="round" stroke-linejoin="round"/></svg><span class="t" style="left:589.00px;top:833.00px;font-size:16px;color:#272b30;transform:scaleX(1.1550);transform-origin:0 0;">Aufbaukurs</span><span class="t" style="left:859.80px;top:833.00px;font-size:16px;color:#272b30;transform:scaleX(1.1550);transform-origin:0 0;">Wien</span><span class="t" style="left:1130.20px;top:833.00px;font-size:16px;color:#272b30;transform:scaleX(0.9402);transform-origin:0 0;">01.11.2023 18:00</span><span class="t" style="left:1400.60px;top:833.00px;font-size:16px;color:#272b30;transform:scaleX(0.9726);transform-origin:0 0;">29.11.2023 18:00</span><svg class="a" style="left:1710px;top:833.97px;" width="25" height="17" viewBox="0 0 25 17"><path d="M0.3 8.3 C4 2 8 0.1 12.2 0.1 C16.4 0.1 20.4 2 24.3 8.3 C20.4 14.6 16.4 16.3 12.2 16.3 C8 16.3 4 14.6 0.3 8.3 Z" fill="#b2cdfa"/><circle cx="12" cy="8.3" r="5.9" fill="#ffffff"/><circle cx="12" cy="8.5" r="4" fill="#3b80f5"/><circle cx="9.4" cy="5.6" r="2.1" fill="#ffffff"/></svg><span class="t" style="left:1744.60px;top:833.00px;font-size:16px;color:#272b30;transform:scaleX(1.1972);transform-origin:0 0;">Veröffentlicht</span><svg class="a" style="left:2019.3px;top:831.67px;" width="19" height="19" viewBox="0 0 19 19"><circle cx="9.7" cy="9.8" r="9.7" fill="#a6e5d0"/><path d="M4.6 10.2 L8.5 14 L15.3 7.2" fill="none" stroke="#16bb84" stroke-width="2.1" stroke-linecap="round" stroke-linejoin="round"/></svg><span class="t" style="left:2049.50px;top:833.00px;font-size:16px;color:#272b30;transform:scaleX(1.0960);transform-origin:0 0;">Aktiv</span><svg class="a" style="left:2263.1px;top:828.4699999999999px;" width="27" height="27" viewBox="0 0 27 27"><circle cx="13.5" cy="13.5" r="11.2" fill="none" stroke="#e8e8e8" stroke-width="4.6"/></svg><span class="t" style="left:2359.60px;top:833.00px;font-size:16px;color:#272b30;transform:scaleX(1.1241);transform-origin:0 0;">0 / 25</span><div class="a" style="left:425.3px;top:881.50px;width:20.5px;height:20.5px;border:1.7px solid #c4c4c4;border-radius:3.5px"></div><svg class="a" style="left:511.5px;top:880.1px;" width="23" height="23" viewBox="0 0 23 23"><path d="M9.6 4.4 H3.8 Q2.1 4.4 2.1 6.1 V18.2 Q2.1 19.9 3.8 19.9 H16.2 Q17.9 19.9 17.9 18.2 V13.7" fill="none" stroke="#b3cdfa" stroke-width="2.6" stroke-linecap="round" stroke-linejoin="round"/><path d="M7.6 14.2 L19.6 2.4" stroke="#3b82f6" stroke-width="2.9" stroke-linecap="round"/><path d="M13.2 1.6 H20.7 V9" fill="none" stroke="#3b82f6" stroke-width="2.8" stroke-linecap="round" stroke-linejoin="round"/></svg><span class="t" style="left:589.00px;top:885.00px;font-size:16px;color:#272b30;transform:scaleX(1.1550);transform-origin:0 0;">Fortgeschrittenenkurs</span><span class="t" style="left:859.80px;top:885.00px;font-size:16px;color:#272b30;transform:scaleX(1.1550);transform-origin:0 0;">Wien</span><span class="t" style="left:1130.20px;top:885.00px;font-size:16px;color:#272b30;transform:scaleX(0.9402);transform-origin:0 0;">01.11.2023 18:00</span><span class="t" style="left:1400.60px;top:885.00px;font-size:16px;color:#272b30;transform:scaleX(0.9726);transform-origin:0 0;">29.11.2023 18:00</span><svg class="a" style="left:1710px;top:885.5px;" width="25" height="17" viewBox="0 0 25 17"><path d="M0.3 8.3 C4 2 8 0.1 12.2 0.1 C16.4 0.1 20.4 2 24.3 8.3 C20.4 14.6 16.4 16.3 12.2 16.3 C8 16.3 4 14.6 0.3 8.3 Z" fill="#b2cdfa"/><circle cx="12" cy="8.3" r="5.9" fill="#ffffff"/><circle cx="12" cy="8.5" r="4" fill="#3b80f5"/><circle cx="9.4" cy="5.6" r="2.1" fill="#ffffff"/></svg><span class="t" style="left:1744.60px;top:885.00px;font-size:16px;color:#272b30;transform:scaleX(1.1972);transform-origin:0 0;">Veröffentlicht</span><svg class="a" style="left:2019.3px;top:883.2px;" width="19" height="19" viewBox="0 0 19 19"><circle cx="9.7" cy="9.8" r="9.7" fill="#a6e5d0"/><path d="M4.6 10.2 L8.5 14 L15.3 7.2" fill="none" stroke="#16bb84" stroke-width="2.1" stroke-linecap="round" stroke-linejoin="round"/></svg><span class="t" style="left:2049.50px;top:885.00px;font-size:16px;color:#272b30;transform:scaleX(1.0960);transform-origin:0 0;">Aktiv</span><svg class="a" style="left:2263.1px;top:879.9999999999999px;" width="27" height="27" viewBox="0 0 27 27"><circle cx="13.5" cy="13.5" r="11.2" fill="none" stroke="#e8e8e8" stroke-width="4.6"/></svg><span class="t" style="left:2359.60px;top:885.00px;font-size:16px;color:#272b30;transform:scaleX(1.1241);transform-origin:0 0;">0 / 25</span><div class="a" style="left:425.3px;top:933.03px;width:20.5px;height:20.5px;border:1.7px solid #c4c4c4;border-radius:3.5px"></div><svg class="a" style="left:511.5px;top:931.63px;" width="23" height="23" viewBox="0 0 23 23"><path d="M9.6 4.4 H3.8 Q2.1 4.4 2.1 6.1 V18.2 Q2.1 19.9 3.8 19.9 H16.2 Q17.9 19.9 17.9 18.2 V13.7" fill="none" stroke="#b3cdfa" stroke-width="2.6" stroke-linecap="round" stroke-linejoin="round"/><path d="M7.6 14.2 L19.6 2.4" stroke="#3b82f6" stroke-width="2.9" stroke-linecap="round"/><path d="M13.2 1.6 H20.7 V9" fill="none" stroke="#3b82f6" stroke-width="2.8" stroke-linecap="round" stroke-linejoin="round"/></svg><span class="t" style="left:589.00px;top:936.00px;font-size:16px;color:#272b30;transform:scaleX(1.1550);transform-origin:0 0;">Fortgeschrittenenkurs</span><span class="t" style="left:859.80px;top:936.00px;font-size:16px;color:#272b30;transform:scaleX(1.1550);transform-origin:0 0;">Fortgeschrittenenkurse</span><span class="t" style="left:1130.20px;top:936.00px;font-size:16px;color:#272b30;transform:scaleX(0.9955);transform-origin:0 0;">01.02.2024 18:00</span><span class="t" style="left:1400.60px;top:936.00px;font-size:16px;color:#272b30;transform:scaleX(1.0597);transform-origin:0 0;">29.02.2024 20:30</span><svg class="a" style="left:1710px;top:937.03px;" width="25" height="17" viewBox="0 0 25 17"><path d="M0.3 8.3 C4 2 8 0.1 12.2 0.1 C16.4 0.1 20.4 2 24.3 8.3 C20.4 14.6 16.4 16.3 12.2 16.3 C8 16.3 4 14.6 0.3 8.3 Z" fill="#b2cdfa"/><circle cx="12" cy="8.3" r="5.9" fill="#ffffff"/><circle cx="12" cy="8.5" r="4" fill="#3b80f5"/><circle cx="9.4" cy="5.6" r="2.1" fill="#ffffff"/></svg><span class="t" style="left:1744.60px;top:936.00px;font-size:16px;color:#272b30;transform:scaleX(1.1972);transform-origin:0 0;">Veröffentlicht</span><svg class="a" style="left:2019.3px;top:934.73px;" width="19" height="19" viewBox="0 0 19 19"><circle cx="9.7" cy="9.8" r="9.7" fill="#a6e5d0"/><path d="M4.6 10.2 L8.5 14 L15.3 7.2" fill="none" stroke="#16bb84" stroke-width="2.1" stroke-linecap="round" stroke-linejoin="round"/></svg><span class="t" style="left:2049.50px;top:936.00px;font-size:16px;color:#272b30;transform:scaleX(1.0960);transform-origin:0 0;">Aktiv</span><svg class="a" style="left:2263.1px;top:931.53px;" width="27" height="27" viewBox="0 0 27 27"><circle cx="13.5" cy="13.5" r="11.2" fill="none" stroke="#e8e8e8" stroke-width="4.6"/><path d="M13.5 2.3000000000000007 A11.2 11.2 0 0 1 16.29 2.65" fill="none" stroke="#ff9f0a" stroke-width="4.6"/></svg><span class="t" style="left:2359.60px;top:936.00px;font-size:16px;color:#272b30;transform:scaleX(1.0242);transform-origin:0 0;">1 / 25</span><div class="a" style="left:425.3px;top:984.56px;width:20.5px;height:20.5px;border:1.7px solid #c4c4c4;border-radius:3.5px"></div><svg class="a" style="left:511.5px;top:983.16px;" width="23" height="23" viewBox="0 0 23 23"><path d="M9.6 4.4 H3.8 Q2.1 4.4 2.1 6.1 V18.2 Q2.1 19.9 3.8 19.9 H16.2 Q17.9 19.9 17.9 18.2 V13.7" fill="none" stroke="#b3cdfa" stroke-width="2.6" stroke-linecap="round" stroke-linejoin="round"/><path d="M7.6 14.2 L19.6 2.4" stroke="#3b82f6" stroke-width="2.9" stroke-linecap="round"/><path d="M13.2 1.6 H20.7 V9" fill="none" stroke="#3b82f6" stroke-width="2.8" stroke-linecap="round" stroke-linejoin="round"/></svg><span class="t" style="left:589.00px;top:988.00px;font-size:16px;color:#272b30;transform:scaleX(1.1550);transform-origin:0 0;">Grundlagenkurs</span><span class="t" style="left:859.80px;top:988.00px;font-size:16px;color:#272b30;transform:scaleX(1.1550);transform-origin:0 0;">Grundlagenkurse</span><span class="t" style="left:1130.20px;top:988.00px;font-size:16px;color:#272b30;transform:scaleX(0.9634);transform-origin:0 0;">01.01.2024 18:00</span><span class="t" style="left:1400.60px;top:988.00px;font-size:16px;color:#272b30;transform:scaleX(1.0276);transform-origin:0 0;">29.01.2024 20:00</span><svg class="a" style="left:1710px;top:988.56px;" width="25" height="17" viewBox="0 0 25 17"><path d="M0.3 8.3 C4 2 8 0.1 12.2 0.1 C16.4 0.1 20.4 2 24.3 8.3 C20.4 14.6 16.4 16.3 12.2 16.3 C8 16.3 4 14.6 0.3 8.3 Z" fill="#b2cdfa"/><circle cx="12" cy="8.3" r="5.9" fill="#ffffff"/><circle cx="12" cy="8.5" r="4" fill="#3b80f5"/><circle cx="9.4" cy="5.6" r="2.1" fill="#ffffff"/></svg><span class="t" style="left:1744.60px;top:988.00px;font-size:16px;color:#272b30;transform:scaleX(1.1972);transform-origin:0 0;">Veröffentlicht</span><svg class="a" style="left:2019.3px;top:986.26px;" width="19" height="19" viewBox="0 0 19 19"><circle cx="9.7" cy="9.8" r="9.7" fill="#a6e5d0"/><path d="M4.6 10.2 L8.5 14 L15.3 7.2" fill="none" stroke="#16bb84" stroke-width="2.1" stroke-linecap="round" stroke-linejoin="round"/></svg><span class="t" style="left:2049.50px;top:988.00px;font-size:16px;color:#272b30;transform:scaleX(1.0960);transform-origin:0 0;">Aktiv</span><svg class="a" style="left:2263.1px;top:983.06px;" width="27" height="27" viewBox="0 0 27 27"><circle cx="13.5" cy="13.5" r="11.2" fill="none" stroke="#e8e8e8" stroke-width="4.6"/><path d="M13.5 2.3000000000000007 A11.2 11.2 0 0 1 18.90 3.69" fill="none" stroke="#ff9f0a" stroke-width="4.6"/></svg><span class="t" style="left:2359.60px;top:988.00px;font-size:16px;color:#272b30;transform:scaleX(1.1241);transform-origin:0 0;">2 / 25</span><div class="a" style="left:425.3px;top:1036.09px;width:20.5px;height:20.5px;border:1.7px solid #c4c4c4;border-radius:3.5px"></div><svg class="a" style="left:511.5px;top:1034.69px;" width="23" height="23" viewBox="0 0 23 23"><path d="M9.6 4.4 H3.8 Q2.1 4.4 2.1 6.1 V18.2 Q2.1 19.9 3.8 19.9 H16.2 Q17.9 19.9 17.9 18.2 V13.7" fill="none" stroke="#b3cdfa" stroke-width="2.6" stroke-linecap="round" stroke-linejoin="round"/><path d="M7.6 14.2 L19.6 2.4" stroke="#3b82f6" stroke-width="2.9" stroke-linecap="round"/><path d="M13.2 1.6 H20.7 V9" fill="none" stroke="#3b82f6" stroke-width="2.8" stroke-linecap="round" stroke-linejoin="round"/></svg><span class="t" style="left:589.00px;top:1039.00px;font-size:16px;color:#272b30;transform:scaleX(1.1550);transform-origin:0 0;">Grundlagenkurs</span><span class="t" style="left:859.80px;top:1039.00px;font-size:16px;color:#272b30;transform:scaleX(1.1550);transform-origin:0 0;">Grundlagenkurse</span><span class="t" style="left:1130.20px;top:1039.00px;font-size:16px;color:#272b30;transform:scaleX(0.9955);transform-origin:0 0;">01.03.2024 18:00</span><span class="t" style="left:1400.60px;top:1039.00px;font-size:16px;color:#272b30;transform:scaleX(1.0276);transform-origin:0 0;">29.03.2024 21:00</span><div class="a" style="left:1738px;top:1038.29px;width:19px;height:19px;border-radius:3px;background:#c8c8c8"></div><svg class="a" style="left:1740px;top:1041.29px;" width="14" height="14" viewBox="0 0 14 14"><path d="M1.9 10.2 L8.8 3.3 L11.2 5.7 L4.3 12.6 H1.9 Z" fill="#888888"/><path d="M9.7 2.4 L11.1 1 L13.5 3.4 L12.1 4.8 Z" fill="#888888"/></svg><span class="t" style="left:1767.00px;top:1039.00px;font-size:16px;color:#272b30;transform:scaleX(1.1005);transform-origin:0 0;">Entwurf</span><svg class="a" style="left:2019.3px;top:1037.79px;" width="19" height="19" viewBox="0 0 19 19"><circle cx="9.7" cy="9.8" r="9.7" fill="#a6e5d0"/><path d="M4.6 10.2 L8.5 14 L15.3 7.2" fill="none" stroke="#16bb84" stroke-width="2.1" stroke-linecap="round" stroke-linejoin="round"/></svg><span class="t" style="left:2049.50px;top:1039.00px;font-size:16px;color:#272b30;transform:scaleX(1.0960);transform-origin:0 0;">Aktiv</span><svg class="a" style="left:2263.1px;top:1034.59px;" width="27" height="27" viewBox="0 0 27 27"><circle cx="13.5" cy="13.5" r="11.2" fill="none" stroke="#e8e8e8" stroke-width="4.6"/></svg><span class="t" style="left:2359.60px;top:1039.00px;font-size:16px;color:#272b30;transform:scaleX(1.1241);transform-origin:0 0;">0 / 25</span><div class="a" style="left:425.3px;top:1087.62px;width:20.5px;height:20.5px;border:1.7px solid #c4c4c4;border-radius:3.5px"></div><svg class="a" style="left:511.5px;top:1086.22px;" width="23" height="23" viewBox="0 0 23 23"><path d="M9.6 4.4 H3.8 Q2.1 4.4 2.1 6.1 V18.2 Q2.1 19.9 3.8 19.9 H16.2 Q17.9 19.9 17.9 18.2 V13.7" fill="none" stroke="#b3cdfa" stroke-width="2.6" stroke-linecap="round" stroke-linejoin="round"/><path d="M7.6 14.2 L19.6 2.4" stroke="#3b82f6" stroke-width="2.9" stroke-linecap="round"/><path d="M13.2 1.6 H20.7 V9" fill="none" stroke="#3b82f6" stroke-width="2.8" stroke-linecap="round" stroke-linejoin="round"/></svg><span class="t" style="left:589.00px;top:1090.00px;font-size:16px;color:#272b30;transform:scaleX(1.1550);transform-origin:0 0;">Aufbaukurs</span><span class="t" style="left:859.80px;top:1090.00px;font-size:16px;color:#272b30;transform:scaleX(1.1550);transform-origin:0 0;">Aufbaukurse</span><span class="t" style="left:1130.20px;top:1090.00px;font-size:16px;color:#272b30;transform:scaleX(0.9634);transform-origin:0 0;">01.01.2024 18:00</span><span class="t" style="left:1400.60px;top:1090.00px;font-size:16px;color:#272b30;transform:scaleX(1.0276);transform-origin:0 0;">29.01.2024 20:00</span><div class="a" style="left:1738px;top:1089.82px;width:19px;height:19px;border-radius:3px;background:#c8c8c8"></div><svg class="a" style="left:1740px;top:1092.82px;" width="14" height="14" viewBox="0 0 14 14"><path d="M1.9 10.2 L8.8 3.3 L11.2 5.7 L4.3 12.6 H1.9 Z" fill="#888888"/><path d="M9.7 2.4 L11.1 1 L13.5 3.4 L12.1 4.8 Z" fill="#888888"/></svg><span class="t" style="left:1767.00px;top:1090.00px;font-size:16px;color:#272b30;transform:scaleX(1.1005);transform-origin:0 0;">Entwurf</span><svg class="a" style="left:2019.3px;top:1089.32px;" width="19" height="19" viewBox="0 0 19 19"><circle cx="9.7" cy="9.8" r="9.7" fill="#a6e5d0"/><path d="M4.6 10.2 L8.5 14 L15.3 7.2" fill="none" stroke="#16bb84" stroke-width="2.1" stroke-linecap="round" stroke-linejoin="round"/></svg><span class="t" style="left:2049.50px;top:1090.00px;font-size:16px;color:#272b30;transform:scaleX(1.0960);transform-origin:0 0;">Aktiv</span><svg class="a" style="left:2263.1px;top:1086.1200000000001px;" width="27" height="27" viewBox="0 0 27 27"><circle cx="13.5" cy="13.5" r="11.2" fill="none" stroke="#e8e8e8" stroke-width="4.6"/></svg><span class="t" style="left:2359.60px;top:1090.00px;font-size:16px;color:#272b30;transform:scaleX(1.1241);transform-origin:0 0;">0 / 25</span><div class="a" style="left:425.3px;top:1139.15px;width:20.5px;height:20.5px;border:1.7px solid #c4c4c4;border-radius:3.5px"></div><svg class="a" style="left:511.5px;top:1137.75px;" width="23" height="23" viewBox="0 0 23 23"><path d="M9.6 4.4 H3.8 Q2.1 4.4 2.1 6.1 V18.2 Q2.1 19.9 3.8 19.9 H16.2 Q17.9 19.9 17.9 18.2 V13.7" fill="none" stroke="#b3cdfa" stroke-width="2.6" stroke-linecap="round" stroke-linejoin="round"/><path d="M7.6 14.2 L19.6 2.4" stroke="#3b82f6" stroke-width="2.9" stroke-linecap="round"/><path d="M13.2 1.6 H20.7 V9" fill="none" stroke="#3b82f6" stroke-width="2.8" stroke-linecap="round" stroke-linejoin="round"/></svg><span class="t" style="left:589.00px;top:1142.00px;font-size:16px;color:#272b30;transform:scaleX(1.1550);transform-origin:0 0;">Fortgeschrittenenkurs</span><span class="t" style="left:859.80px;top:1142.00px;font-size:16px;color:#272b30;transform:scaleX(1.1550);transform-origin:0 0;">Fortgeschrittenenkurse</span><span class="t" style="left:1130.20px;top:1142.00px;font-size:16px;color:#272b30;transform:scaleX(0.9955);transform-origin:0 0;">01.04.2024 18:00</span><span class="t" style="left:1400.60px;top:1142.00px;font-size:16px;color:#272b30;transform:scaleX(1.0597);transform-origin:0 0;">29.04.2024 20:30</span><div class="a" style="left:1738px;top:1141.35px;width:19px;height:19px;border-radius:3px;background:#c8c8c8"></div><svg class="a" style="left:1740px;top:1144.35px;" width="14" height="14" viewBox="0 0 14 14"><path d="M1.9 10.2 L8.8 3.3 L11.2 5.7 L4.3 12.6 H1.9 Z" fill="#888888"/><path d="M9.7 2.4 L11.1 1 L13.5 3.4 L12.1 4.8 Z" fill="#888888"/></svg><span class="t" style="left:1767.00px;top:1142.00px;font-size:16px;color:#272b30;transform:scaleX(1.1005);transform-origin:0 0;">Entwurf</span><svg class="a" style="left:2019.3px;top:1140.85px;" width="19" height="19" viewBox="0 0 19 19"><circle cx="9.7" cy="9.8" r="9.7" fill="#a6e5d0"/><path d="M4.6 10.2 L8.5 14 L15.3 7.2" fill="none" stroke="#16bb84" stroke-width="2.1" stroke-linecap="round" stroke-linejoin="round"/></svg><span class="t" style="left:2049.50px;top:1142.00px;font-size:16px;color:#272b30;transform:scaleX(1.0960);transform-origin:0 0;">Aktiv</span><svg class="a" style="left:2263.1px;top:1137.6499999999999px;" width="27" height="27" viewBox="0 0 27 27"><circle cx="13.5" cy="13.5" r="11.2" fill="none" stroke="#e8e8e8" stroke-width="4.6"/></svg><span class="t" style="left:2359.60px;top:1142.00px;font-size:16px;color:#272b30;transform:scaleX(1.1241);transform-origin:0 0;">0 / 25</span><svg class="a" style="left:436px;top:1206px;" width="14" height="13" viewBox="0 0 14 13"><path d="M1.2 0.5 V12.5" stroke="#bdbdbd" stroke-width="1.6"/><path d="M12 1 L6 6.5 L12 12" fill="none" stroke="#bdbdbd" stroke-width="1.6"/></svg><svg class="a" style="left:492px;top:1206px;" width="9" height="13" viewBox="0 0 9 13"><path d="M7.5 1 L1.5 6.5 L7.5 12" fill="none" stroke="#bdbdbd" stroke-width="1.6"/></svg><div class="a" style="left:531px;top:1196px;width:35px;height:33px;border-radius:50%;background:#3f7be8"></div><span class="t" style="left:543.50px;top:1205.00px;font-size:15px;color:#ffffff;font-weight:700;">1</span><svg class="a" style="left:597px;top:1206px;" width="9" height="13" viewBox="0 0 9 13"><path d="M1.5 1 L7.5 6.5 L1.5 12" fill="none" stroke="#bdbdbd" stroke-width="1.6"/></svg><svg class="a" style="left:647px;top:1206px;" width="14" height="13" viewBox="0 0 14 13"><path d="M12.8 0.5 V12.5" stroke="#bdbdbd" stroke-width="1.6"/><path d="M2 1 L8 6.5 L2 12" fill="none" stroke="#bdbdbd" stroke-width="1.6"/></svg><span class="t" style="left:733.60px;top:1209.00px;font-size:17.5px;color:#555555;">25</span><svg class="a" style="left:795px;top:1213px;" width="15" height="8" viewBox="0 0 15 8"><path d="M0 0 H15 L7.5 7.4 Z" fill="#808080"/></svg><span class="t" style="left:855.20px;top:1205.00px;font-size:15px;color:#555555;transform:scaleX(1.2320);transform-origin:0 0;">Einträge anzeigen</span><span class="t" style="left:2218.30px;top:1200.00px;font-size:15.5px;color:#555555;transform:scaleX(1.1139);transform-origin:0 0;">1 von 1 Seiten (16 Einträge)</span><div class="a" style="left:2058.4px;top:346px;width:58.4px;height:56.6px;background:#f6aa48;border-radius:18px 4px 14px 14px;box-shadow:0 4px 6px rgba(0,0,0,0.32);z-index:5"></div><span class="t" style="left:2072.90px;top:353.00px;font-size:43px;color:#4a2b03;transform:scaleX(0.9078);transform-origin:0 0;z-index:6;">D</span>
</body></html>
